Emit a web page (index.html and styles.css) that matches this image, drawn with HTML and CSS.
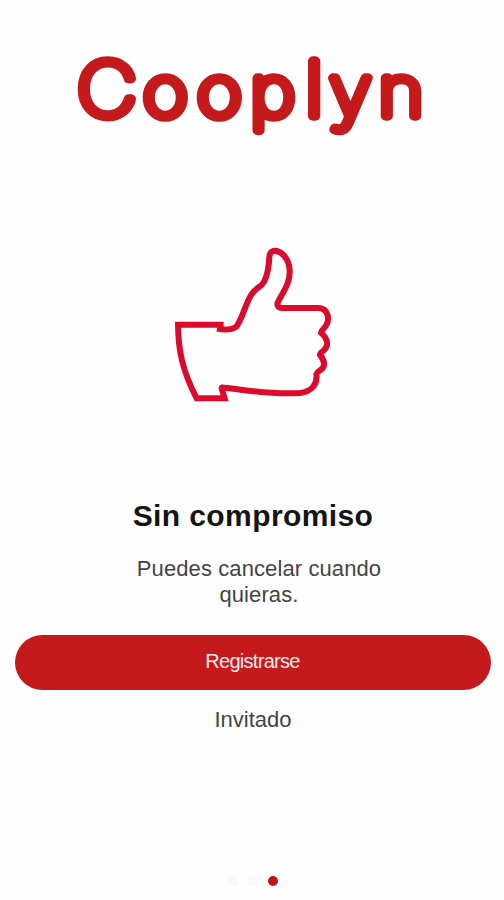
FILE: index.html
```html
<!DOCTYPE html>
<html lang="es">
<head>
	<meta charset="UTF-8">
	<title>Cooplyn</title>
	<link rel="stylesheet" href="styles.css">
</head>
<body>
<div class="page">
<svg class="logo" viewBox="0 0 504 160">
<text transform="scale(1.1 1)" y="116" x="70 130 179 227.5 277.5 299.5 344">
<tspan class="tall">C</tspan>oop<tspan class="tall">l</tspan>yn</text>
</svg>
<svg class="thumb" viewBox="0 0 540 540">
<path d="M191 269H54C55 345 66 405 110 490H194L185 460Q184 456 194 458C260 465 330 480 420 474C455 470 473 448 469 418Q471 411 480 406C498 396 494 376 480 360Q480 353 488 349C508 334 505 312 483 293Q484 287 490 282C515 255 505 219 473 219H368C351 219 349 207 356 197C375 162 391 140 389 105C386 64 359 45 339 48C326 52 328 67 327 82C324 110 319 135 305 150C290 162 282 164 272 182C255 211 247 251 229 275C213 287 192 285 171 281"/>
</svg>
<h1>Sin compromiso</h1>
<p class="info">Puedes cancelar cuando<br>quieras.</p>
<button class="btn">Registrarse</button>
<a class="guest">Invitado</a>
<ul class="dots">
<li></li>
<li></li>
<li class="on"></li>
</ul>
</div>
</body>
</html>
```
FILE: styles.css
```css
*{
	padding: 0;
	margin: 0;
	list-style: none;
	box-sizing: border-box;
}
body{
	background-color: #fefefe;
	font-family: "Liberation Sans", Arial, sans-serif;
}
.page{
	width: 504px;
	height: 900px;
	display: flex;
	flex-direction: column;
	align-items: center;
	overflow: hidden;
}
.logo{
	width: 504px;
	height: 160px;
	flex: none;
}
.logo text{
	font-family: Inter, sans-serif;
	font-size: 70px;
	font-weight: 100;
	fill: #c51a1b;
	stroke: #c51a1b;
	stroke-width: 9.5px;
	stroke-linejoin: round;
	stroke-linecap: round;
}
.logo .tall{
	font-size: 75px;
}
.thumb{
	width: 180px;
	height: 180px;
	margin: 75px 0 0 -4px;
	flex: none;
}
.thumb path{
	fill: none;
	stroke: #dc0a2c;
	stroke-width: 18px;
}
h1{
	margin: 83px 0 0 2px;
	font-size: 30px;
	line-height: 36px;
	letter-spacing: 0.4px;
	color: #151515;
}
.info{
	margin: 22px 0 0 14px;
	font-size: 22px;
	line-height: 26px;
	letter-spacing: 0.1px;
	text-align: center;
	color: #444;
}
.btn{
	width: 476px;
	height: 55px;
	margin: 27px 0 0 1px;
	padding-bottom: 2px;
	border: none;
	border-radius: 28px;
	background-color: #c51a1b;
	font-family: inherit;
	font-size: 20px;
	letter-spacing: -0.7px;
	color: #fdeaea;
}
.guest{
	margin: 17px 0 0 2px;
	font-size: 22px;
	line-height: 26px;
	color: #444;
}
.dots{
	display: flex;
	gap: 10px;
	margin: 143px 0 0 2px;
}
.dots li{
	width: 10px;
	height: 10px;
	border-radius: 3px;
	background-color: #f9f9f9;
}
.dots .on{
	border-radius: 5px;
	background-color: #bd1418;
}
```
